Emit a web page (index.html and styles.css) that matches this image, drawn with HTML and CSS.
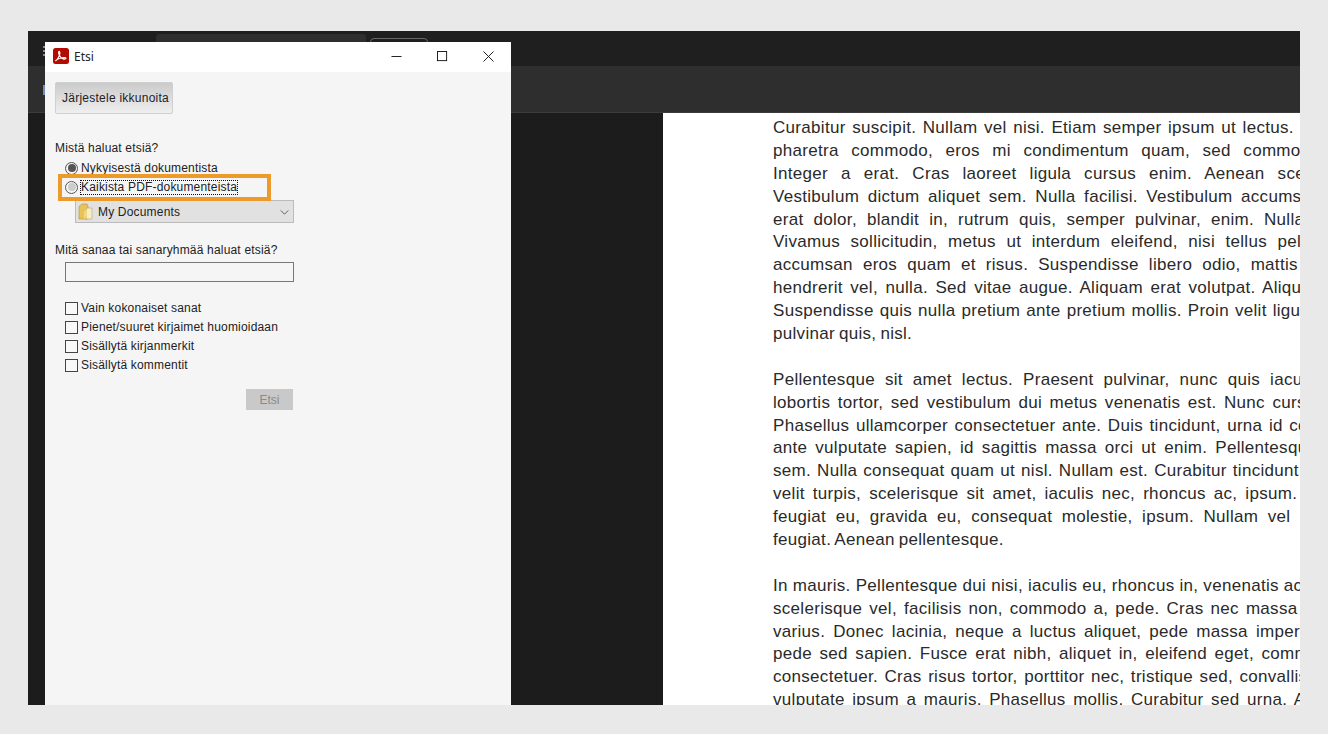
FILE: index.html
```html
<!DOCTYPE html>
<html lang="fi">
<head>
<meta charset="utf-8">
<title>Etsi</title>
<link rel="stylesheet" href="styles.css">
</head>
<body>
<div class="frame">
  <div class="app">
    <div class="topbar"><span class="dots"></span><div class="tab"></div><div class="tabbtn"></div></div>
    <div class="toolbar"><span class="mark"></span></div>
    <div class="workspace">
      <div class="page">
        <div class="para">
          <p class="s1-5">Curabitur suscipit. Nullam vel nisi. Etiam semper ipsum ut lectus. Proin aliquam, erat eget</p>
          <p class="s7-5">pharetra commodo, eros mi condimentum quam, sed commodo justo quam ut</p>
          <p class="s8">Integer a erat. Cras laoreet ligula cursus enim. Aenean scelerisque velit et tellus.</p>
          <p class="s3-5">Vestibulum dictum aliquet sem. Nulla facilisi. Vestibulum accumsan ante vitae elit.</p>
          <p class="s5">erat dolor, blandit in, rutrum quis, semper pulvinar, enim. Nullam varius congue</p>
          <p class="s5-5">Vivamus sollicitudin, metus ut interdum eleifend, nisi tellus pellentesque elit,</p>
          <p class="s5">accumsan eros quam et risus. Suspendisse libero odio, mattis sit amet, aliquet</p>
          <p class="s2-5">hendrerit vel, nulla. Sed vitae augue. Aliquam erat volutpat. Aliquam feugiat vulputate</p>
          <p class="s1">Suspendisse quis nulla pretium ante pretium mollis. Proin velit ligula, sagittis at, egestas</p>
          <p>pulvinar quis, nisl.</p>
        </div>
        <div class="para">
          <p class="s5">Pellentesque sit amet lectus. Praesent pulvinar, nunc quis iaculis sagittis, justo quam</p>
          <p class="s2-5">lobortis tortor, sed vestibulum dui metus venenatis est. Nunc cursus ligula. Nulla</p>
          <p class="s1-5">Phasellus ullamcorper consectetuer ante. Duis tincidunt, urna id condimentum luctus,</p>
          <p class="s3">ante vulputate sapien, id sagittis massa orci ut enim. Pellentesque vestibulum</p>
          <p class="s1">sem. Nulla consequat quam ut nisl. Nullam est. Curabitur tincidunt dapibus lorem.</p>
          <p class="s3">velit turpis, scelerisque sit amet, iaculis nec, rhoncus ac, ipsum. Phasellus lorem</p>
          <p class="s4-5">feugiat eu, gravida eu, consequat molestie, ipsum. Nullam vel est ut ipsum volutpat</p>
          <p>feugiat. Aenean pellentesque.</p>
        </div>
        <div class="para">
          <p class="s0">In mauris. Pellentesque dui nisi, iaculis eu, rhoncus in, venenatis ac, ante. Ut odio</p>
          <p class="s2">scelerisque vel, facilisis non, commodo a, pede. Cras nec massa sit amet tortor</p>
          <p class="s3">varius. Donec lacinia, neque a luctus aliquet, pede massa imperdiet ante, at varius</p>
          <p class="s2-5">pede sed sapien. Fusce erat nibh, aliquet in, eleifend eget, commodo eget, erat. Fusce</p>
          <p class="s1-5">consectetuer. Cras risus tortor, porttitor nec, tristique sed, convallis semper, eros.</p>
          <p class="s2-5">vulputate ipsum a mauris. Phasellus mollis. Curabitur sed urna. Aliquam nec</p>
        </div>
      </div>
    </div>
  </div>

  <div class="dialog">
    <div class="titlebar">
      <svg class="pdf" viewBox="0 0 16 16"><rect width="16" height="16" rx="2.5" fill="#b30b00"/><path d="M2.8 12.6c1.6-.9 3-3.4 3.900-6.200.3-1.200.3-2.900-.5-3-.9 0-.7 2-.1 3.300.9 2 2.500 3.700 4 4.200 1 .3 2.900.3 2.900-.6 0-.8-2-.8-3.500-.6-2 .3-4.600 1-6.100 2.300-.7.600-.9.900-.6.600z" fill="none" stroke="#fff" stroke-width="1.100"/></svg>
      <span class="title">Etsi</span>
      <div class="winbtns">
        <svg viewBox="0 0 12 12"><path d="M.5 6h11" stroke="#111" fill="none"/></svg>
        <svg viewBox="0 0 12 12"><rect x=".5" y=".5" width="10" height="10" stroke="#111" fill="none"/></svg>
        <svg viewBox="0 0 12 12"><path d="M.5.500l11 11M11.500.500l-11 11" stroke="#111" fill="none"/></svg>
      </div>
    </div>
    <div class="dlgbody">
      <button class="arrange">Järjestele ikkunoita</button>
      <div class="label where">Mistä haluat etsiä?</div>
      <div class="radios">
        <div class="row"><span class="radio on"></span><span class="label">Nykyisestä dokumentista</span></div>
        <div class="row"><span class="radio"></span><span class="label focus">Kaikista PDF-dokumenteista</span></div>
      </div>
      <div class="select">
        <svg class="folder" viewBox="0 0 16 18"><path d="M1 3.500 4 1h5l1 2v13H1z" fill="#e8c25a" stroke="#b8913a" stroke-width=".6"/><path d="M8.500 5h5.500v11H7l1.500-1z" fill="#f6eec8" stroke="#b8a26a" stroke-width=".6"/><path d="M6 16V9l3-3v8z" fill="#f4d978"/></svg>
        <span class="label">My Documents</span>
        <svg class="chev" viewBox="0 0 10 6"><path d="M.5.500 5 5 9.500.500" fill="none" stroke="#444"/></svg>
      </div>
      <div class="label what">Mitä sanaa tai sanaryhmää haluat etsiä?</div>
      <div class="input"></div>
      <div class="checks">
        <div class="row"><span class="check"></span><span class="label">Vain kokonaiset sanat</span></div>
        <div class="row"><span class="check"></span><span class="label">Pienet/suuret kirjaimet huomioidaan</span></div>
        <div class="row"><span class="check"></span><span class="label">Sisällytä kirjanmerkit</span></div>
        <div class="row"><span class="check"></span><span class="label">Sisällytä kommentit</span></div>
      </div>
      <div class="actions"><button class="search">Etsi</button></div>
    </div>
  </div>
  <div class="callout"></div>
</div>
</body>
</html>
```
FILE: styles.css
```css
* { box-sizing: border-box; }
html, body { margin: 0; height: 100%; }
body { background: #e9e9e9; overflow: hidden; font-family: "Liberation Sans", Arial, sans-serif; }

.frame { position: relative; width: 1328px; height: 734px; padding: 31px 28px 29px; }
.app { height: 674px; display: flex; flex-direction: column; overflow: hidden; background: #1c1c1c; }
.topbar { height: 35px; background: #1f1f1f; display: flex; align-items: flex-end; padding-left: 15px; gap: 4px; }
.dots { width: 3px; height: 10px; margin: 0 106px 10px 0; background: repeating-linear-gradient(#8a8a8a 0 2px, transparent 2px 4px); }
.tab { width: 210px; height: 32px; background: #2e2e2e; border-radius: 3px 3px 0 0; }
.tabbtn { width: 58px; height: 28px; border: 1px solid #666; border-radius: 4px; }
.toolbar { height: 47px; background: #2e2e2e; border-bottom: 1px solid #3c3c3c; padding: 19px 0 0 15px; }
.mark { display: block; width: 3px; height: 10px; background: #6f8fb8; }
.workspace { flex: 1; display: flex; justify-content: flex-end; min-height: 0; }
.page { width: 637px; background: #fff; padding: 4px 0 0 110px; overflow: hidden; }
.para { margin-bottom: 22.9px; width: 720px; }
.para p { margin: 0; height: 22.9px; line-height: 22.9px; font-size: 17px; letter-spacing: .3px; word-spacing: -1px; color: #2a2a2a; white-space: nowrap; }
.para p.s0 { word-spacing: 0; }
.para p.s1 { word-spacing: 1px; }
.para p.s1-5 { word-spacing: 1.5px; }
.para p.s2 { word-spacing: 2px; }
.para p.s2-5 { word-spacing: 2.5px; }
.para p.s3 { word-spacing: 3px; }
.para p.s3-5 { word-spacing: 3.5px; }
.para p.s4-5 { word-spacing: 4.5px; }
.para p.s5 { word-spacing: 5px; }
.para p.s5-5 { word-spacing: 5.5px; }
.para p.s7-5 { word-spacing: 7.5px; }
.para p.s8 { word-spacing: 8px; }

.dialog { position: absolute; left: 45px; top: 42px; width: 466px; height: 663px; background: #f5f5f5; overflow: hidden; }
.titlebar { height: 30px; background: #fff; display: flex; align-items: center; padding: 0 0 2px 8px; }
.pdf { width: 16px; height: 16px; }
.title { font: 12px "Noto Sans", "Open Sans", sans-serif; color: #222; margin-left: 5px; }
.winbtns { margin-left: auto; display: flex; gap: 35px; padding-right: 17px; align-items: center; }
.winbtns svg { width: 11px; height: 11px; display: block; }

.dlgbody { padding: 10px 10px 0; width: 259px; }
.label { font-size: 12px; letter-spacing: .18px; color: #222; white-space: nowrap; }
.arrange { display: block; width: 118px; height: 32px; padding: 0 0 1px 3px; font: 12px "Liberation Sans", Arial, sans-serif; letter-spacing: .25px; color: #222; background: linear-gradient(#cbcbcb, #efefef); border: 1px solid #cfcfcf; border-radius: 2px; }
.where { margin-top: 27px; line-height: 14px; }
.radios { margin: 6px 0 0 10px; display: flex; flex-direction: column; gap: 5px; }
.row { display: flex; align-items: center; height: 14px; gap: 3px; }
.radio { width: 13px; height: 13px; border-radius: 50%; border: 1px solid #555; background: #f5f5f5; position: relative; flex: none; }
.radio::after { content: ""; position: absolute; inset: 1.5px; border-radius: 50%; background: #ccc; }
.radio.on::after { background: #555; }
.focus { outline: 1px dotted #111; outline-offset: 0; line-height: 13px; }
.select { margin: 6px 0 0 20px; height: 23px; width: 219px; background: #e1e1e1; border: 1px solid #bbb; display: flex; align-items: center; padding: 1px 3px 0 2px; }
.folder { width: 16px; height: 18px; flex: none; }
.select .label { margin-left: 4px; }
.chev { width: 9px; height: 5px; margin-left: auto; margin-right: 1px; }
.what { margin-top: 20px; line-height: 14px; }
.input { margin: 5px 0 0 10px; width: 229px; height: 20px; border: 1px solid #777; background: #f5f5f5; }
.checks { margin: 19px 0 0 10px; display: flex; flex-direction: column; gap: 5px; }
.check { width: 13px; height: 13px; border: 1px solid #444; background: #f8f8f8; flex: none; }
.actions { display: flex; justify-content: flex-end; margin-top: 17px; }
.search { width: 47px; height: 21px; padding: 0; margin-right: 1px; font: 12px "Liberation Sans", Arial, sans-serif; color: #8a8a8a; background: #c9c9c9; border: none; }
.callout { position: absolute; left: 58px; top: 174px; width: 213px; height: 27px; border: 4px solid #ec9a29; }
```
